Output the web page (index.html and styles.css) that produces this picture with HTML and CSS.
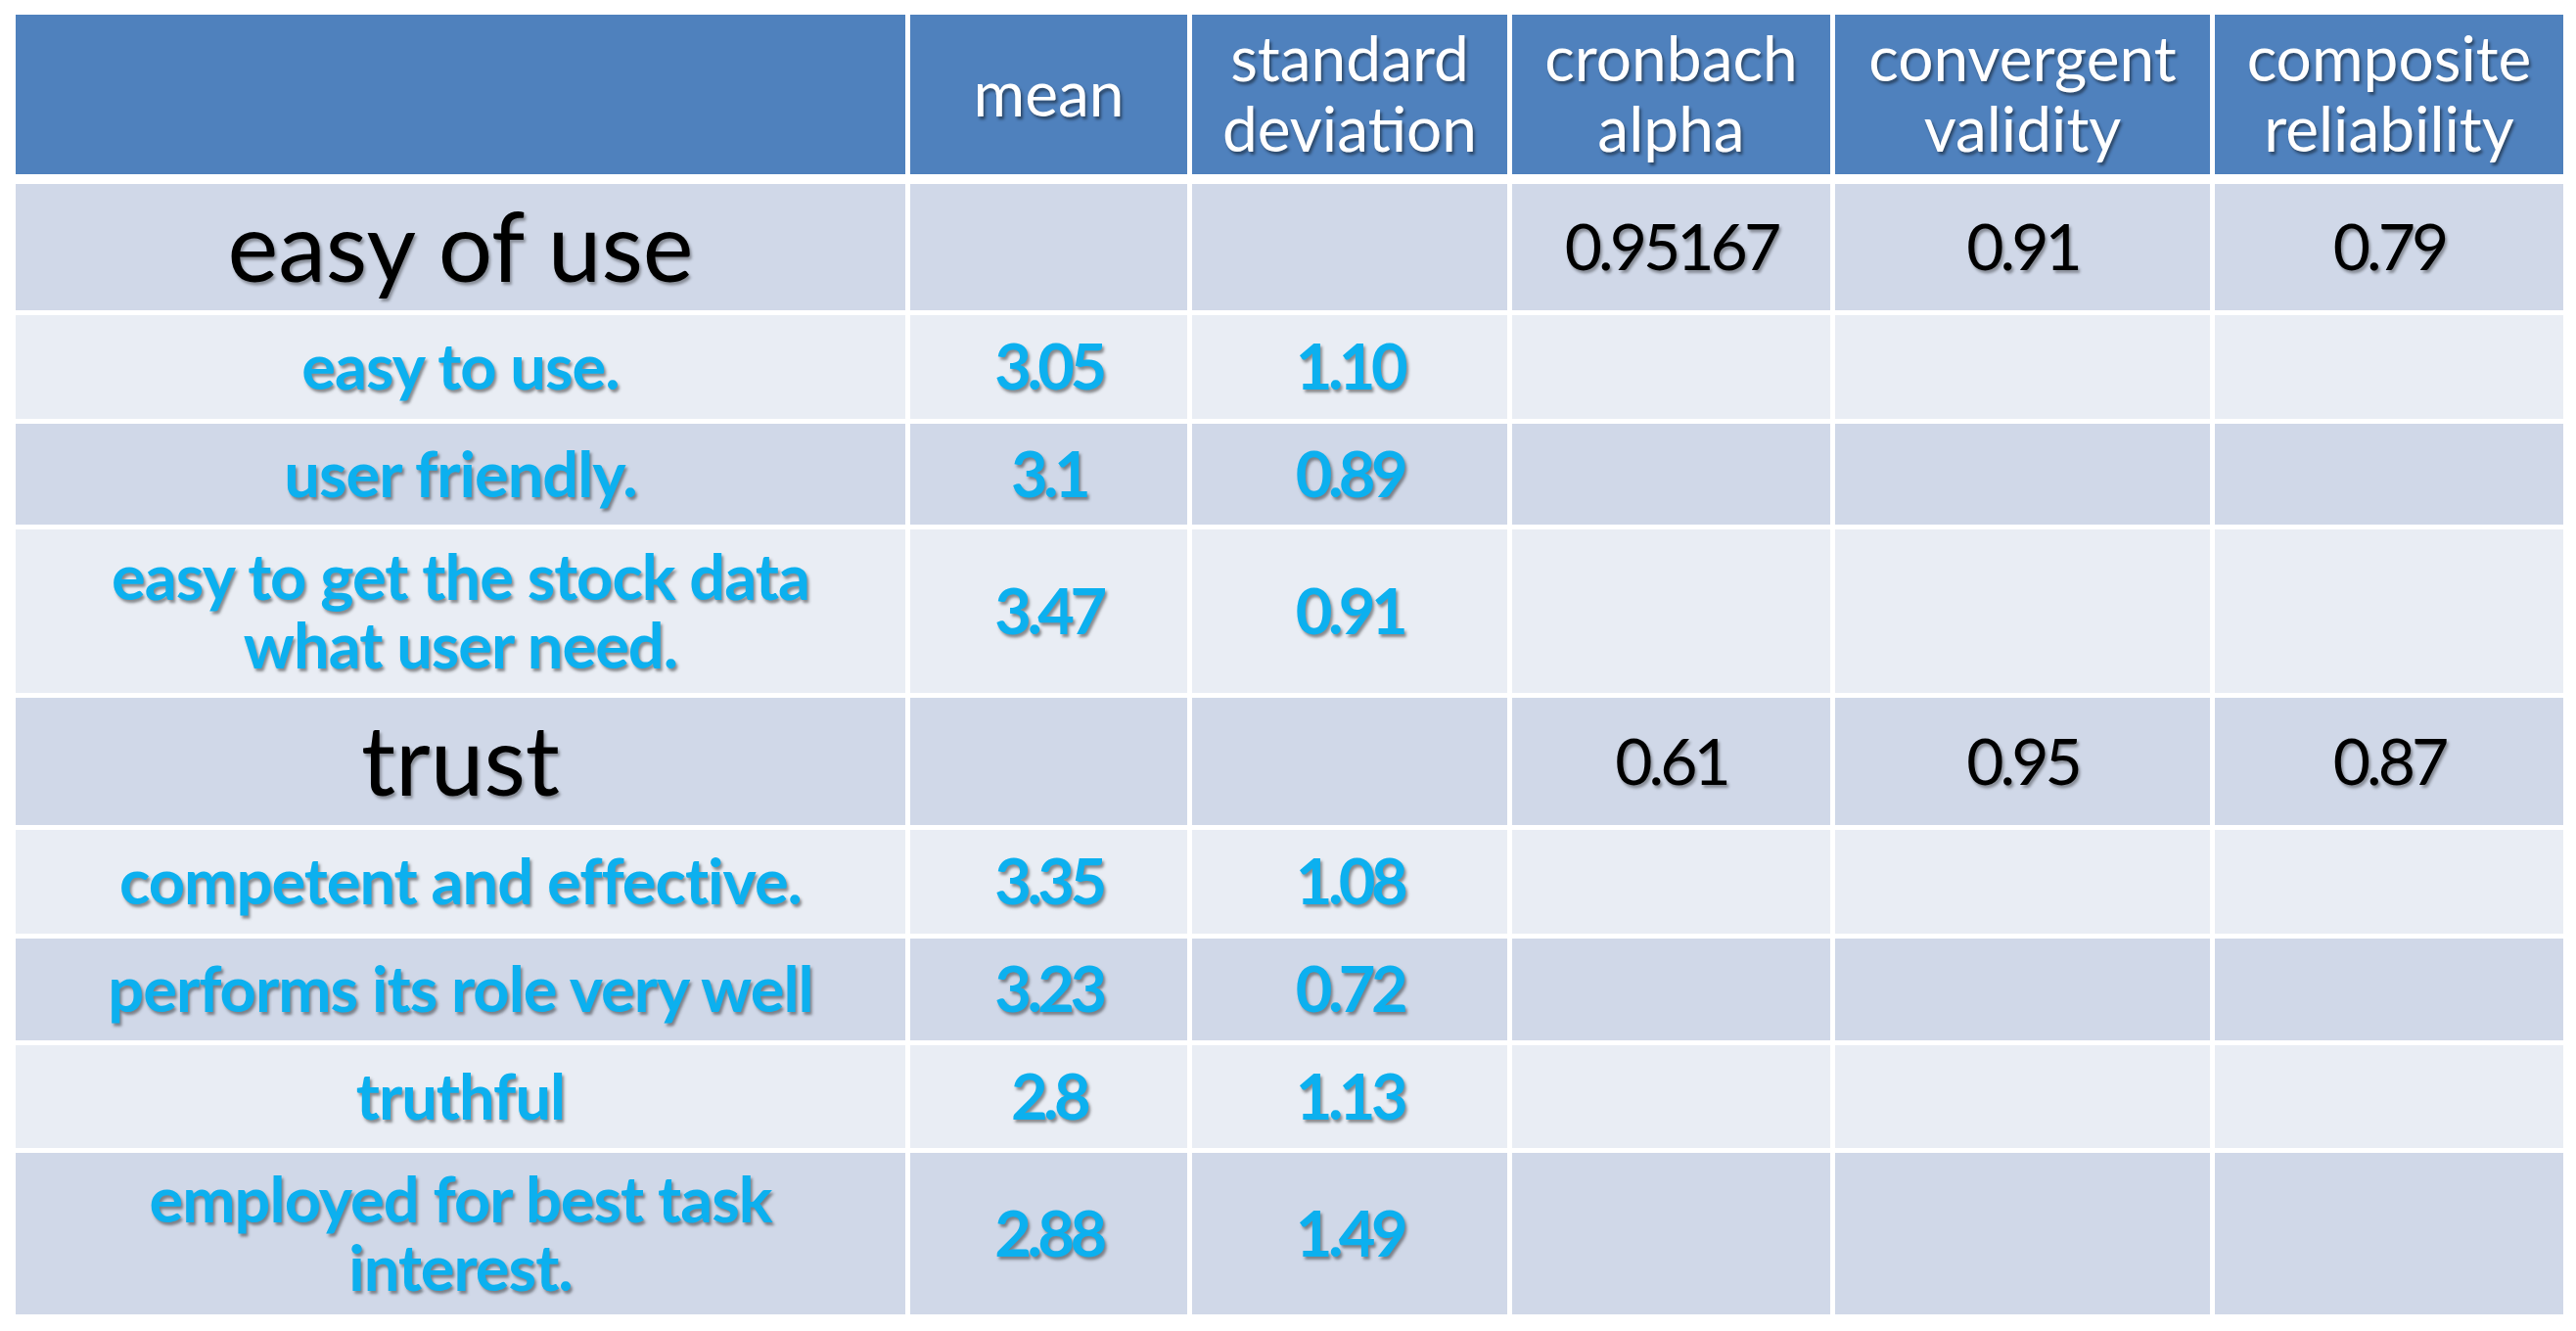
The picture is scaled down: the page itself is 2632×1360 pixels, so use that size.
FILE: index.html
```html
<!DOCTYPE html>
<html lang="en">
<head>
<meta charset="utf-8">
<title>Measurement results</title>
<link rel="stylesheet" href="styles.css">
</head>
<body>
<div class="sheet">
  <div class="table">
    <div class="row head">
      <div class="cell"></div>
      <div class="cell">mean</div>
      <div class="cell">standard<br>deviation</div>
      <div class="cell">cronbach<br>alpha</div>
      <div class="cell">convergent<br>validity</div>
      <div class="cell">composite<br>reliability</div>
    </div>

    <div class="row dark r1">
      <div class="cell cat">easy of use</div>
      <div class="cell"></div>
      <div class="cell"></div>
      <div class="cell stat">0.95167</div>
      <div class="cell stat">0.91</div>
      <div class="cell stat">0.79</div>
    </div>

    <div class="row light r2">
      <div class="cell item">easy to use.</div>
      <div class="cell item num">3.05</div>
      <div class="cell item num">1.10</div>
      <div class="cell"></div>
      <div class="cell"></div>
      <div class="cell"></div>
    </div>

    <div class="row dark r3">
      <div class="cell item">user friendly.</div>
      <div class="cell item num">3.1</div>
      <div class="cell item num">0.89</div>
      <div class="cell"></div>
      <div class="cell"></div>
      <div class="cell"></div>
    </div>

    <div class="row light r4">
      <div class="cell item">easy to get the stock data<br>what user need.</div>
      <div class="cell item num">3.47</div>
      <div class="cell item num">0.91</div>
      <div class="cell"></div>
      <div class="cell"></div>
      <div class="cell"></div>
    </div>

    <div class="row dark r5">
      <div class="cell cat">trust</div>
      <div class="cell"></div>
      <div class="cell"></div>
      <div class="cell stat">0.61</div>
      <div class="cell stat">0.95</div>
      <div class="cell stat">0.87</div>
    </div>

    <div class="row light r6">
      <div class="cell item">competent and effective.</div>
      <div class="cell item num">3.35</div>
      <div class="cell item num">1.08</div>
      <div class="cell"></div>
      <div class="cell"></div>
      <div class="cell"></div>
    </div>

    <div class="row dark r7">
      <div class="cell item">performs its role very well</div>
      <div class="cell item num">3.23</div>
      <div class="cell item num">0.72</div>
      <div class="cell"></div>
      <div class="cell"></div>
      <div class="cell"></div>
    </div>

    <div class="row light r8">
      <div class="cell item">truthful</div>
      <div class="cell item num">2.8</div>
      <div class="cell item num">1.13</div>
      <div class="cell"></div>
      <div class="cell"></div>
      <div class="cell"></div>
    </div>

    <div class="row dark r9">
      <div class="cell item">employed for best task<br>interest.</div>
      <div class="cell item num">2.88</div>
      <div class="cell item num">1.49</div>
      <div class="cell"></div>
      <div class="cell"></div>
      <div class="cell"></div>
    </div>
  </div>
</div>
</body>
</html>
```

FILE: styles.css
```css
html, body {
  margin: 0;
  padding: 0;
  background: #ffffff;
}

body {
  font-family: Lato, "Open Sans", "Noto Sans", sans-serif;
}

.sheet {
  padding: 15px 0 0 16px;
}

.table {
  display: flex;
  flex-direction: column;
  gap: 5px;
  width: 2603px;
}

.row {
  display: grid;
  grid-template-columns: 909px 283px 322px 325px 383px 356px;
  column-gap: 5px;
}

.cell {
  display: flex;
  align-items: center;
  justify-content: center;
  text-align: center;
}

.head {
  height: 163px;
  margin-bottom: 5px;
}

.head .cell {
  background: #4f81bd;
  color: #ffffff;
  font-size: 64px;
  line-height: 72px;
  font-weight: 400;
  text-shadow: 2px 3px 3px rgba(0, 0, 0, 0.45);
  padding-bottom: 4px;
}

.dark .cell {
  background: #d0d8e8;
}

.light .cell {
  background: #e9edf4;
}

.r1 { height: 129px; }
.r2 { height: 106px; }
.r3 { height: 103px; }
.r4 { height: 167px; }
.r5 { height: 130px; }
.r6 { height: 106px; }
.r7 { height: 104px; }
.r8 { height: 105px; }
.r9 { height: 165px; }

.cat {
  font-size: 98px;
  color: #000000;
  font-weight: 400;
  text-shadow: 2px 3px 3px rgba(0, 0, 0, 0.35);
  padding-bottom: 6px;
}

.item {
  font-size: 65px;
  line-height: 70px;
  font-weight: 700;
  letter-spacing: -1px;
  color: #0cb0ef;
  text-shadow: 2px 3px 3px rgba(40, 40, 40, 0.5);
  padding-bottom: 4px;
}

.num {
  letter-spacing: -0.07em;
}

.stat {
  font-size: 66px;
  color: #000000;
  font-weight: 400;
  letter-spacing: -0.06em;
  text-shadow: 2px 3px 3px rgba(0, 0, 0, 0.35);
  padding-bottom: 4px;
}
```
